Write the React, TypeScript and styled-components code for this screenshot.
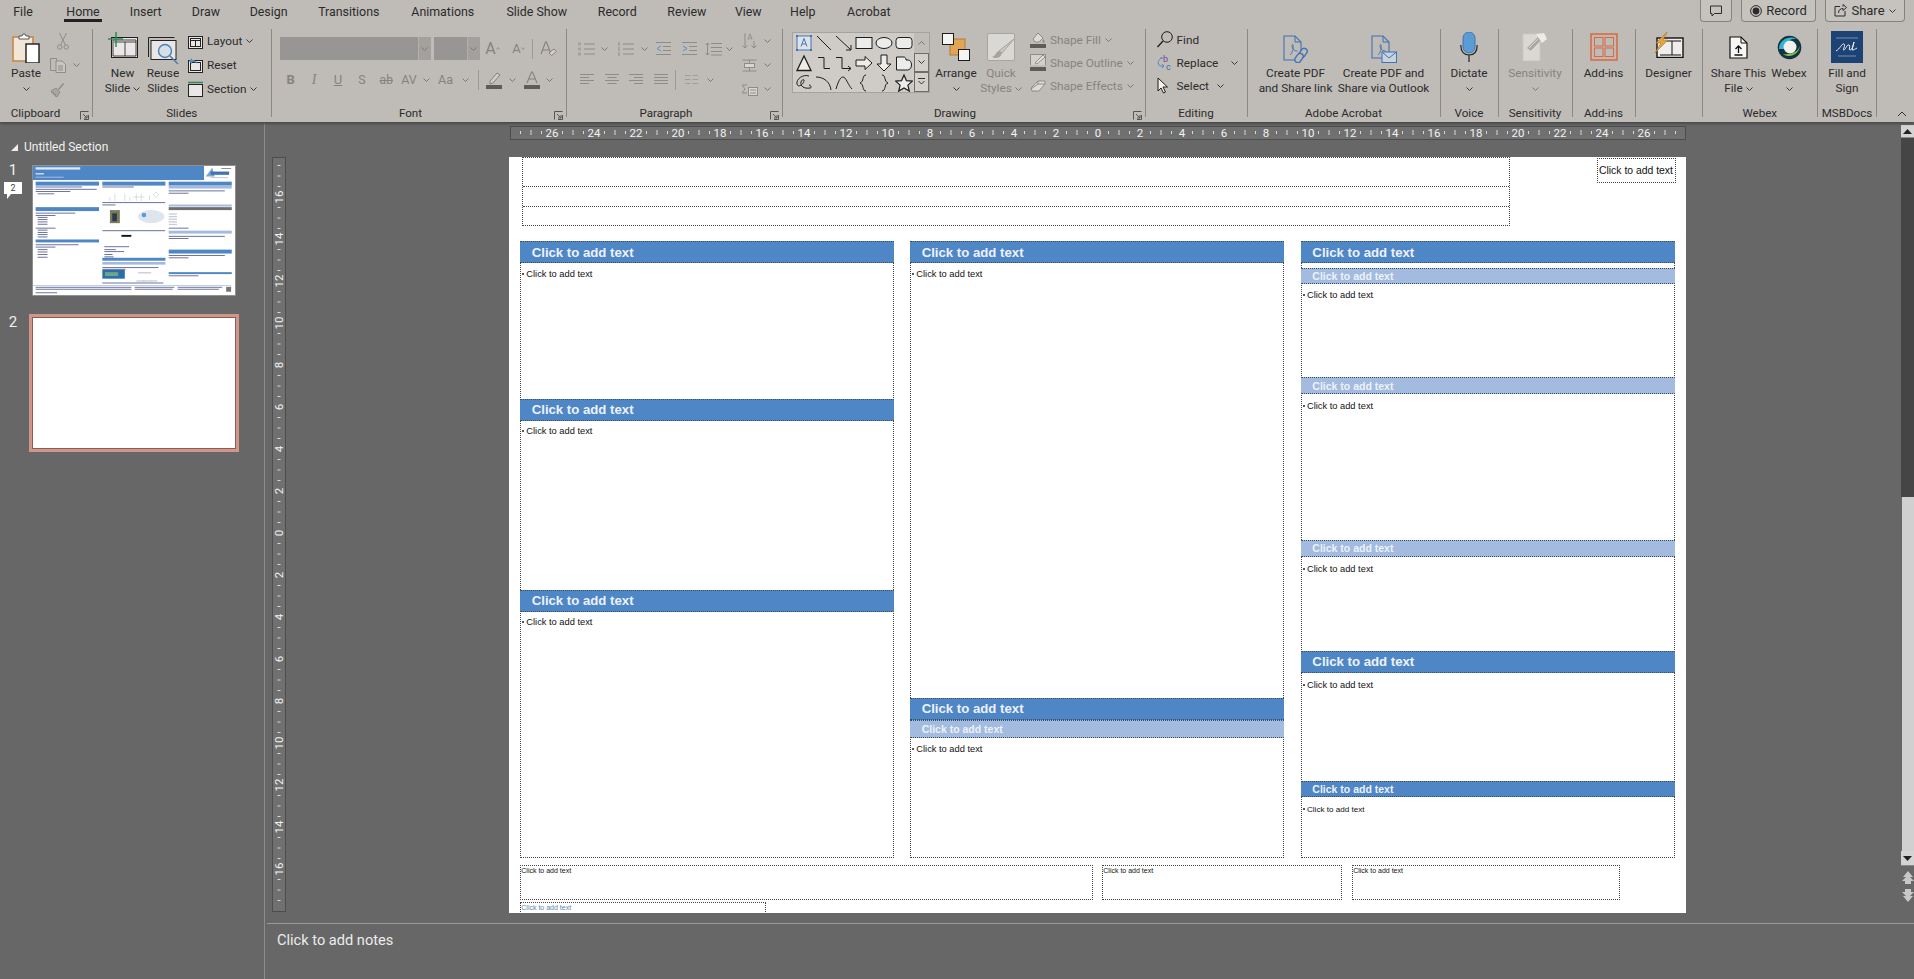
import React from "react";
import styled, { createGlobalStyle } from "styled-components";

const colors = {
  ribbon: "#bfbbb7",
  ribbonLine: "#8b8885",
  text: "#2b2b2b",
  muted: "#85837f",
  stage: "#676767",
  band: "#4f86c6",
  subBand: "#a3bbdf",
  dash: "#444444",
};

const GlobalStyle = createGlobalStyle`
  html, body { margin: 0; padding: 0; background: ${colors.stage}; overflow: hidden; }
  * { box-sizing: border-box; }
`;

const Root = styled.div`
  width: 1914px;
  height: 979px;
  display: flex;
  flex-direction: column;
  overflow: hidden;
  background: ${colors.stage};
  font-family: Roboto, "Noto Sans", sans-serif;
  color: ${colors.text};
`;

/* ---------- ribbon ---------- */

const Ribbon = styled.header`
  height: 122px;
  flex: none;
  background: ${colors.ribbon};
  box-shadow: 0 2px 2px #4c4c4c;
  position: relative;
  z-index: 2;
`;

const TabRow = styled.nav`
  height: 29px;
  display: flex;
  align-items: flex-start;
`;

const Tab = styled.div<{ $w: number; $active?: boolean }>`
  width: ${(p) => p.$w}px;
  height: 22px;
  flex: none;
  display: flex;
  align-items: center;
  justify-content: center;
  font-size: 12.4px;
  position: relative;
  ${(p) =>
    p.$active &&
    `&::after {
      content: "";
      position: absolute;
      left: 50%;
      margin-left: -19px;
      width: 38px;
      bottom: 0;
      height: 3px;
      background: #222;
    }`}
`;

const TopActions = styled.div`
  margin-left: auto;
  margin-right: 9px;
  display: flex;
  gap: 9px;
`;

const TopButton = styled.div<{ $w: number }>`
  width: ${(p) => p.$w}px;
  height: 22px;
  display: flex;
  align-items: center;
  justify-content: center;
  gap: 4px;
  border: 1px solid #86837f;
  border-top: none;
  border-radius: 0 0 4px 4px;
  background: #c6c3bf;
  font-size: 13px;
`;

const GroupRow = styled.div`
  display: flex;
  height: 88px;
  position: relative;
`;

const Group = styled.section<{ $w: number }>`
  width: ${(p) => p.$w}px;
  flex: none;
  height: 88px;
  display: grid;
  grid-template-rows: 76px 12px;
  border-right: 1px solid ${colors.ribbonLine};
  position: relative;
`;

const GroupBody = styled.div<{ $pad?: number }>`
  display: flex;
  align-items: flex-start;
  padding-left: ${(p) => p.$pad ?? 0}px;
`;

const GroupLabel = styled.div<{ $pr?: number }>`
  text-align: center;
  font-size: 11.6px;
  line-height: 16px;
  height: 16px;
  padding-right: ${(p) => p.$pr ?? 0}px;
  white-space: nowrap;
`;

const Launcher = styled.svg`
  position: absolute;
  right: 3px;
  bottom: -3px;
`;

const CollapseChevron = styled.svg`
  position: absolute;
  left: 1897px;
  top: 82px;
`;

const BigButton = styled.div<{ $w: number; $muted?: boolean; $ml?: number }>`
  width: ${(p) => p.$w}px;
  margin-left: ${(p) => p.$ml ?? 0}px;
  flex: none;
  display: flex;
  flex-direction: column;
  align-items: center;
  color: ${(p) => (p.$muted ? colors.muted : colors.text)};
`;

const IconSlot = styled.div<{ $top: number }>`
  height: 37px;
  padding-top: ${(p) => p.$top}px;
  display: flex;
  justify-content: center;
`;

const Line = styled.div`
  height: 15.4px;
  font-size: 11.8px;
  line-height: 15.4px;
  white-space: nowrap;
  display: flex;
  align-items: center;
  gap: 3px;
`;

const Stack = styled.div<{ $ml?: number; $row?: number; $mt?: number }>`
  margin-left: ${(p) => p.$ml ?? 0}px;
  margin-top: ${(p) => p.$mt ?? 0}px;
  display: flex;
  flex-direction: column;
  > * {
    height: ${(p) => p.$row ?? 24}px;
  }
`;

const SmallRow = styled.div<{ $muted?: boolean; $gap?: number }>`
  display: flex;
  align-items: center;
  gap: ${(p) => p.$gap ?? 4}px;
  font-size: 11.8px;
  white-space: nowrap;
  color: ${(p) => (p.$muted ? colors.muted : colors.text)};
`;

const ToolColumn = styled.div`
  display: flex;
  flex-direction: column;
  gap: 8px;
  padding-top: 8px;
`;

const ToolRow = styled.div`
  display: flex;
  align-items: center;
  height: 23px;
`;

const Cell = styled.div<{ $w: number }>`
  width: ${(p) => p.$w}px;
  flex: none;
  display: flex;
  align-items: center;
  justify-content: center;
  color: ${colors.muted};
  font-size: 12.5px;
`;

const BoldGlyph = styled.span`
  font-weight: 700;
  font-size: 13px;
`;

const ItalicGlyph = styled.span`
  font-style: italic;
  font-family: "Liberation Serif", serif;
  font-size: 14px;
`;

const UnderGlyph = styled.span`
  text-decoration: underline;
  font-size: 13px;
`;

const StrikeGlyph = styled.span`
  text-decoration: line-through;
  font-size: 12px;
`;

const CapGlyph = styled.span<{ $size: number }>`
  font-size: ${(p) => p.$size}px;
  line-height: 1;
`;

const CellRule = styled.div`
  width: 1px;
  height: 20px;
  background: #9c9995;
  flex: none;
`;

const NameBox = styled.div<{ $w: number; $ml?: number }>`
  width: ${(p) => p.$w}px;
  margin-left: ${(p) => p.$ml ?? 0}px;
  height: 23px;
  flex: none;
  background: #989694;
  display: flex;
  justify-content: flex-end;
`;

const DropPart = styled.div`
  width: 13px;
  height: 23px;
  background: #a3a19e;
  border-left: 1px solid #b2afac;
  display: flex;
  align-items: center;
  justify-content: center;
`;

const Gallery = styled.div`
  width: 138px;
  height: 61px;
  margin-top: 2.7px;
  flex: none;
  display: flex;
  background: #cfccc8;
  border: 1px solid #a5a29f;
`;

const ShapeGrid = styled.div`
  flex: 1;
  padding: 0 0 0 1px;
  display: grid;
  grid-template-columns: repeat(6, 20px);
  grid-template-rows: repeat(3, 20px);
  align-items: center;
  justify-items: center;
`;

const GalleryScroll = styled.div`
  width: 15px;
  flex: none;
  display: grid;
  grid-template-rows: 20px 19px 20px;
`;

const GalleryButton = styled.div<{ $active?: boolean }>`
  display: flex;
  align-items: center;
  justify-content: center;
  background: ${(p) => (p.$active ? "#d3d0cc" : "#c0bdb9")};
  border: ${(p) => (p.$active ? "1px solid #6f6d6a" : "none")};
`;

/* ---------- workspace ---------- */

const Workspace = styled.div`
  flex: 1;
  display: flex;
  min-height: 0;
`;

const ThumbPanel = styled.aside`
  width: 265px;
  flex: none;
  border-right: 1px solid #8d8d8d;
  padding: 17px 0 0 4px;
  display: flex;
  flex-direction: column;
  color: #f0f0f0;
`;

const SectionTitle = styled.div`
  height: 16px;
  display: flex;
  align-items: center;
  gap: 6px;
  padding-left: 7px;
  font-size: 12px;
  margin-bottom: 6.5px;
`;

const ThumbRow = styled.div`
  display: flex;
  margin-bottom: 14px;
`;

const NumberColumn = styled.div`
  width: 25px;
  flex: none;
  display: flex;
  flex-direction: column;
`;

const SlideNumber = styled.div`
  width: 18px;
  height: 17px;
  text-align: center;
  font-size: 15px;
  line-height: 17px;
`;

const CommentBadge = styled.div`
  margin-top: 3px;
  width: 18px;
  height: 12px;
  background: #fff;
  color: #444;
  font-size: 9px;
  line-height: 12px;
  text-align: center;
  position: relative;
  &::after {
    content: "";
    position: absolute;
    left: 3px;
    top: 12px;
    border-style: solid;
    border-width: 5px 4px 0 0;
    border-color: #fff transparent transparent transparent;
  }
`;

const ThumbFrame = styled.div<{ $selected?: boolean }>`
  width: 210px;
  height: 138px;
  padding: ${(p) => (p.$selected ? "0" : "3.5px 3.3px")};
  border: ${(p) => (p.$selected ? "3px solid #d1968a" : "none")};
  box-shadow: ${(p) => (p.$selected ? "inset 0 0 0 1px #8c5c52" : "none")};
`;

const ThumbPage = styled.div`
  width: 100%;
  height: 100%;
  background: #fff;
  border: 1px solid #8f8f8f;
  display: flex;
`;

const BlankPage = styled.div`
  margin: 1px;
  width: calc(100% - 2px);
  height: calc(100% - 2px);
  background: #fff;
`;

const Editor = styled.main`
  flex: 1;
  min-width: 0;
  display: flex;
  flex-direction: column;
`;

const StageRow = styled.div`
  height: 801px;
  flex: none;
  display: flex;
`;

const StageGrid = styled.div`
  flex: 1;
  display: grid;
  grid-template-columns: 244px 1177px 1fr;
  grid-template-rows: 35px 756px;
`;

const RulerH = styled.svg`
  display: block;
  grid-column: 2;
  grid-row: 1;
  margin: 4px 0 0 1px;
  background: #707070;
  outline: 1px solid #4d4d4d;
  outline-offset: -1px;
`;

const RulerV = styled.svg`
  display: block;
  grid-column: 1;
  grid-row: 2;
  margin-left: 7px;
  background: #707070;
  outline: 1px solid #4d4d4d;
  outline-offset: -1px;
`;

const RulerText = styled.text`
  fill: #f2f2f2;
  font-size: 11.5px;
  font-family: Roboto, sans-serif;
`;

const Scrollbar = styled.div`
  width: 13px;
  flex: none;
  padding-top: 3px;
  display: flex;
  flex-direction: column;
`;

const ScrollButton = styled.div<{ $h: number }>`
  height: ${(p) => p.$h}px;
  flex: none;
  background: #d4d4d4;
  border-bottom: 1px solid #8a8a8a;
  display: flex;
  align-items: center;
  justify-content: center;
`;

const ScrollTrack = styled.div`
  height: 358.5px;
  flex: none;
  background: #454545;
`;

const ScrollThumb = styled.div`
  height: 354.5px;
  flex: none;
  margin-left: 1px;
  background: #d0d0d0;
`;

const PageNav = styled.div`
  display: flex;
  flex-direction: column;
  align-items: center;
  gap: 5px;
  padding: 5px 0 0 1px;
`;

const Notes = styled.footer`
  flex: 1;
  margin-left: 2px;
  border-top: 1px solid #9a9a9a;
  padding: 6px 0 0 10px;
  font-size: 14.6px;
  line-height: 20px;
  color: #ececec;
`;

/* ---------- slide ---------- */

const Slide = styled.article`
  grid-column: 2;
  grid-row: 2;
  height: 756px;
  background: #fff;
  overflow: hidden;
  font-family: "Liberation Sans", Arial, sans-serif;
  color: #111;
  display: flex;
  flex-direction: column;
`;

const SlideTop = styled.div`
  height: 69px;
  flex: none;
  display: flex;
  justify-content: space-between;
  padding: 0 10.5px 0 13.3px;
`;

const TitleBlock = styled.div`
  width: 987.4px;
  border: 1px dotted ${colors.dash};
  display: grid;
  grid-template-rows: 29px 20px 1fr;
`;

const TitleLine = styled.div`
  border-bottom: 1px dotted ${colors.dash};
  &:last-child {
    border-bottom: none;
  }
`;

const LogoBox = styled.div`
  width: 79px;
  height: 25px;
  margin-top: 1px;
  border: 1px dotted ${colors.dash};
  padding: 5px 0 0 1.5px;
  font-size: 10.4px;
  line-height: 13px;
  white-space: nowrap;
`;

const Columns = styled.div`
  margin: 15.3px 0 0 11.3px;
  height: 616.4px;
  flex: none;
  display: flex;
`;

const Column = styled.div<{ $w: number; $ml?: number }>`
  width: ${(p) => p.$w}px;
  margin-left: ${(p) => p.$ml ?? 0}px;
  flex: none;
  border: 1px dotted ${colors.dash};
  display: flex;
  flex-direction: column;
`;

const Band = styled.div<{ $kind?: "main" | "sub" | "small"; $h?: number }>`
  height: ${(p) => p.$h ?? (p.$kind === "main" || !p.$kind ? 22 : 16.6)}px;
  flex: none;
  margin: 0 -1px;
  border-top: 1px dotted #3d4c60;
  border-bottom: 1px dotted #3d4c60;
  background: ${(p) => (p.$kind === "sub" ? colors.subBand : colors.band)};
  color: #edf2fa;
  font-weight: 700;
  font-size: ${(p) => (p.$kind === "main" || !p.$kind ? 13.2 : 10.5)}px;
  display: flex;
  align-items: center;
  padding-left: 11.4px;
  white-space: nowrap;
  &:first-child {
    margin-top: -1px;
  }
`;

const Body = styled.div<{ $h?: number; $pt?: number }>`
  ${(p) => (p.$h ? `height: ${p.$h}px; flex: none;` : "flex: 1;")}
  display: flex;
  padding: ${(p) => p.$pt ?? 4.5}px 0 0 1px;
`;

const BulletText = styled.div<{ $small?: boolean }>`
  display: flex;
  align-items: center;
  height: 12px;
  font-size: ${(p) => (p.$small ? 8.1 : 9.3)}px;
  white-space: nowrap;
  &::before {
    content: "";
    width: 2px;
    height: 2px;
    border-radius: 50%;
    background: #222;
    margin-right: 2px;
  }
`;

const FooterRow = styled.div`
  margin: 7.6px 0 0 11.3px;
  height: 34.4px;
  flex: none;
  display: flex;
  gap: 9.7px;
`;

const NoteBox = styled.div<{ $w: number }>`
  width: ${(p) => p.$w}px;
  flex: none;
  border: 1px dotted ${colors.dash};
  font-size: 7px;
  line-height: 9px;
  white-space: nowrap;
`;

const SourceBox = styled.div`
  margin: 2.3px 0 0 11.3px;
  width: 245.5px;
  height: 14px;
  flex: none;
  border: 1px dotted ${colors.dash};
  font-size: 7px;
  line-height: 10px;
  color: #5a86b0;
  white-space: nowrap;
`;

/* ---------- icons ---------- */

const Svg = ({ w, h, children }: { w: number; h: number; children?: React.ReactNode }) => (
  <svg width={w} height={h} viewBox={`0 0 ${w} ${h}`} fill="none" style={{ flex: "none", display: "block" }}>
    {children}
  </svg>
);

const Chev = ({ color = "#3a3a3a" }: { color?: string }) => (
  <Svg w={7} h={4}>
    <path d="M.5.5l3 3 3-3" stroke={color} />
  </Svg>
);

const MutedChev = () => <Chev color="#7b7976" />;

const LauncherIcon = () => (
  <Launcher width="9" height="9" viewBox="0 0 9 9" fill="none">
    <path d="M.5 8.5V.5h8M8.5 4v4.5H4M3 3l4 4M7 4v3H4" stroke="#555" />
  </Launcher>
);

const PasteIcon = () => (
  <Svg w={28} h={30}>
    <rect x="1" y="4" width="20" height="24" fill="#f2e6d6" stroke="#c4894c" strokeWidth="1.6" />
    <path d="M7 6V3h3l1-2h2l1 2h3v3z" fill="#fff" stroke="#555" />
    <rect x="14" y="11" width="13" height="19" fill="#fff" stroke="#1c1c1c" strokeWidth="1.4" />
  </Svg>
);

const CutIcon = () => (
  <Svg w={12} h={17}>
    <path d="M2.5 0l6 12M9.5 0l-6 12" stroke="#8e8c88" />
    <circle cx="2.8" cy="14" r="2.2" stroke="#8e8c88" />
    <circle cx="9.2" cy="14" r="2.2" stroke="#8e8c88" />
  </Svg>
);

const CopyIcon = () => (
  <Svg w={17} h={15}>
    <path d="M.5.5h6v12h-6z" stroke="#8e8c88" />
    <path d="M6 3h6l3.5 3.5V14.5H6z" fill="#c9c6c2" stroke="#8e8c88" />
    <path d="M8 8h5M8 10h5M8 12h5" stroke="#8e8c88" />
  </Svg>
);

const BrushIcon = () => (
  <Svg w={15} h={15}>
    <path d="M1 9l5-3 4 4-3 5-2-1 1-2-2 1-1-1 1-2-2 1z" fill="#aaa7a3" stroke="#8e8c88" />
    <path d="M8 7l5-6 1 1-5 6z" fill="#8e8c88" />
  </Svg>
);

const NewSlideIcon = () => (
  <Svg w={30} h={26}>
    <rect x="3.5" y="5.5" width="26" height="20" fill="#e9e8e6" stroke="#1d1d1d" />
    <path d="M5 8h23M5 24h23M5 8v16M28 8v16M17 10v14M6 10h22" stroke="#1d1d1d" strokeWidth=".8" />
    <path d="M8 0v15M0 7h15" stroke="#2f8a57" strokeWidth="1.5" />
  </Svg>
);

const ReuseIcon = () => (
  <Svg w={31} h={28}>
    <path d="M.5 20V.5h26" stroke="#222" />
    <rect x="3" y="3.5" width="25" height="19" fill="#e8e7e5" stroke="#222" />
    <circle cx="17" cy="14" r="6.5" fill="#d7dee7" stroke="#4e7fb4" strokeWidth="1.4" />
    <path d="M22 19l8 8" stroke="#4e7fb4" strokeWidth="1.6" />
  </Svg>
);

const FrameIcon = ({ kind }: { kind: "layout" | "reset" | "section" }) => (
  <Svg w={15} h={16}>
    {kind === "section" && <path d="M0 1.5h15" stroke="#2f8a57" strokeWidth="1.5" />}
    <rect x=".5" y="3.5" width="14" height="12" fill="#e8e7e5" stroke="#222" />
    {kind !== "section" && <rect x="2.5" y="5.5" width="10" height="8" stroke="#222" />}
    {kind === "layout" && <path d="M2.5 7.5h10M7.5 7.5v6" stroke="#222" />}
    {kind === "reset" && <path d="M1 4l3-3v2c3 0 5 1 5 4-1-2-3-2-5-2v2z" fill="#5c8cc4" />}
  </Svg>
);

const AGlyph = ({ size, up }: { size: number; up: boolean }) => (
  <Cell $w={26}>
    <CapGlyph $size={size}>A</CapGlyph>
    <Svg w={4} h={3}>
      <path d={up ? "M.5 2.5l1.5-2 1.5 2" : "M.5.5l1.5 2 1.5-2"} stroke={colors.muted} strokeWidth=".7" />
    </Svg>
  </Cell>
);

const ClearIcon = () => (
  <Svg w={17} h={15}>
    <path d="M1 13L5.5 1h1L11 13M3 9h6" stroke={colors.muted} strokeWidth="1.1" />
    <path d="M9 12l5-4 2.5 2.5-5 4z" fill="#d9cfc7" stroke={colors.muted} />
  </Svg>
);

const ColorBar = ({ kind }: { kind: "pen" | "font" }) => (
  <Svg w={16} h={18}>
    {kind === "pen" ? (
      <path d="M4 10l7-8 3 2-7 8-3 1z" fill="#cfccc8" stroke={colors.muted} />
    ) : (
      <path d="M3 12L7.5 1h1L13 12M5 8h6" stroke={colors.muted} strokeWidth="1.1" />
    )}
    <rect x="0" y="14" width="16" height="4" fill="#5e5c5a" />
  </Svg>
);

const ListIcon = ({ kind }: { kind: "bullet" | "number" }) => (
  <Svg w={17} h={14}>
    {[2, 7, 12].map((y) => (
      <path key={y} d={`M6 ${y}h11`} stroke="#8e8c88" />
    ))}
    {[2, 7, 12].map((y) =>
      kind === "bullet" ? (
        <rect key={y} x="0" y={y - 1.5} width="3" height="3" fill="#a4a29e" />
      ) : (
        <path key={y} d={`M2 ${y - 2}v4`} stroke="#8e8c88" />
      )
    )}
  </Svg>
);

const IndentIcon = ({ dir }: { dir: "in" | "out" }) => (
  <Svg w={15} h={13}>
    <path d="M0 .5h15M7 4.5h8M7 8.5h8M0 12.5h15" stroke="#8e8c88" />
    <path d={dir === "out" ? "M5 4L1 6.5 5 9" : "M1 4l4 2.5L1 9"} stroke="#5d8fc2" />
  </Svg>
);

const LineSpacingIcon = () => (
  <Svg w={17} h={14}>
    <path d="M6 1.5h11M6 5.5h11M6 9.5h11M6 13h11M2.5 1v12M.5 3l2-2 2 2M.5 11l2 2 2-2" stroke="#8e8c88" />
  </Svg>
);

const AlignIcon = ({ kind }: { kind: "left" | "center" | "right" | "justify" }) => {
  const short = kind === "justify" ? 14 : 9;
  const x = kind === "left" || kind === "justify" ? 0 : kind === "center" ? 2.5 : 5;
  return (
    <Svg w={14} h={13}>
      <path d={`M0 1.5h14M${x} 4.5h${short}M0 7.5h14M${x} 10.5h${short}`} stroke="#8e8c88" />
    </Svg>
  );
};

const ColumnsIcon = () => (
  <Svg w={13} h={12}>
    <path d="M0 1.5h5.5M7.5 1.5H13M0 5.5h5.5M7.5 5.5H13M0 9.5h5.5M7.5 9.5H13" stroke="#a09e9a" />
  </Svg>
);

const TextDirIcon = () => (
  <Svg w={15} h={17}>
    <path d="M3 0v15M.5 12.5L3 15l2.5-2.5M12 8v7M9.5 12.5L12 15l2.5-2.5" stroke="#8e8c88" />
    <path d="M6 7l1.7-6h.6L10 7M6.5 5h3" stroke="#8e8c88" strokeWidth=".8" />
  </Svg>
);

const AlignTextIcon = () => (
  <Svg w={15} h={15}>
    <path d="M.5 2h14M.5 13h14M7.5 2v3M7.5 13v-3" stroke="#8e8c88" />
    <rect x="2.5" y="5.5" width="10" height="4" fill="#d9d6d2" stroke="#8e8c88" />
  </Svg>
);

const SmartArtIcon = () => (
  <Svg w={16} h={13}>
    <path d="M5 2H0l3 4-3 4h5" stroke="#8e8c88" />
    <rect x="6.5" y="4.5" width="9" height="8" fill="#d9d6d2" stroke="#8e8c88" />
    <path d="M8 7h6M8 10h6" stroke="#8e8c88" />
  </Svg>
);

const shapeStroke = { stroke: "#1d1d1d", fill: "none" };
const shapeFill = { stroke: "#1d1d1d", fill: "#ececea" };

const shapes: React.ReactNode[] = [
  <>
    <rect x="2" y="2" width="14" height="14" fill="#dfe3e8" stroke="#3f76b4" />
    <rect x="1" y="1" width="2" height="2" fill="#3f76b4" />
    <rect x="15" y="1" width="2" height="2" fill="#3f76b4" />
    <rect x="1" y="15" width="2" height="2" fill="#3f76b4" />
    <rect x="15" y="15" width="2" height="2" fill="#3f76b4" />
    <path d="M6 12.5l3-8 3 8M7.2 10h3.6" stroke="#3f76b4" />
  </>,
  <path d="M2 2l14 14" {...shapeStroke} />,
  <path d="M1 2l15 14M11 16h5v-5" {...shapeStroke} />,
  <rect x="1" y="3.5" width="16" height="11" {...shapeFill} />,
  <ellipse cx="9" cy="9" rx="8" ry="5.5" {...shapeFill} />,
  <rect x="1" y="3.5" width="16" height="11" rx="3" {...shapeFill} />,
  <path d="M9 2l7 14.5H2z" {...shapeFill} strokeWidth="1.3" />,
  <path d="M3 3.5h6v11h6" {...shapeStroke} />,
  <path d="M1 3.5h6v11h9M13 12l3 2.5-3 2.5" {...shapeStroke} />,
  <path d="M1 6h9V2.5L17 9l-7 6.5V12H1z" {...shapeFill} />,
  <path d="M6 1h6v9h4l-7 7-7-7h4z" {...shapeFill} />,
  <path d="M1.5 3H9c1 0 2 1 2 3h2c2 0 3.5 2 3.5 5s-2 5-4 5H1.5z" {...shapeFill} />,
  <path d="M14 2C8 0 1 5 2 10c1 4 6 1 7-3 .5-2-2-2-3 1-1 4 3 7 9 6 2 0 1-3-1-3" {...shapeStroke} />,
  <path d="M1 3c8 0 14 5 15 13" {...shapeStroke} />,
  <path d="M1 15C4 5 6 3 8 3c3 0 5 8 9 12" {...shapeStroke} />,
  <path d="M11 1C7 1 9 8 5 9c4 1 2 8 6 8" {...shapeStroke} />,
  <path d="M7 1c4 0 2 7 6 8-4 1-2 8-6 8" {...shapeStroke} />,
  <path d="M9 1l2.4 5.6 6 .5-4.5 4 1.4 6L9 14l-5.3 3.1 1.4-6L.6 7.100l6-.5z" {...shapeFill} strokeWidth="1.2" />,
];

const ArrangeIcon = () => (
  <Svg w={28} h={28}>
    <rect x="8" y="6" width="15" height="16" fill="#e2a457" stroke="#b97a31" />
    <rect x=".5" y=".5" width="11" height="11" fill="#f4f4f2" stroke="#1c1c1c" />
    <rect x="16.5" y="16.5" width="11" height="11" fill="#f4f4f2" stroke="#1c1c1c" />
  </Svg>
);

const QuickStylesIcon = () => (
  <Svg w={29} h={29}>
    <rect x=".5" y=".5" width="27" height="27" rx="1.5" fill="#dad8d5" stroke="#a7a5a2" />
    <path d="M27 6L15 20l-3-2z" fill="#cfccc8" stroke="#a09e9a" />
    <path d="M12 18c-3 0-2 4-7 6 4 2 9 1 10-4z" fill="#a5a29f" />
  </Svg>
);

const FillIcon = () => (
  <Svg w={16} h={17}>
    <path d="M3 8l5-6 5 5-4 4H5z" fill="#dedbd7" stroke="#8e8c88" />
    <path d="M13 8c2 2 2 3 1 4-1 0-2-1-1-4z" fill="#8e8c88" />
    <rect x="0" y="13" width="16" height="4" fill="#5e5c5a" />
  </Svg>
);

const OutlineIcon = () => (
  <Svg w={16} h={17}>
    <path d="M.5 11V.5h15V11" fill="#d3d0cc" stroke="#8e8c88" />
    <path d="M5 9l8-8 2 2-8 7z" fill="#e6e3e0" stroke="#8e8c88" />
    <rect x="0" y="13" width="16" height="4" fill="#5e5c5a" />
  </Svg>
);

const EffectsIcon = () => (
  <Svg w={16} h={14}>
    <path d="M1 9l7-7h7v3l-6 7H2z" fill="#dedbd7" stroke="#8e8c88" />
    <path d="M8 2v3h7M8 5l-7 5" stroke="#8e8c88" />
  </Svg>
);

const FindIcon = () => (
  <Svg w={16} h={17}>
    <circle cx="10" cy="6" r="5.3" stroke="#1c1c1c" />
    <path d="M6 10l-5.5 6" stroke="#1c1c1c" strokeWidth="1.3" />
  </Svg>
);

const ReplaceIcon = () => (
  <Svg w={16} h={17}>
    <text x="6" y="8" fontSize="9" fill="#7b3f98" fontFamily="Roboto, sans-serif">b</text>
    <text x="9" y="16" fontSize="9" fill="#3c6fa8" fontFamily="Roboto, sans-serif">c</text>
    <path d="M5 4C1 5 0 10 3 12h4M5 10l2 2-2 2M3 4h3" stroke="#4f86c6" />
  </Svg>
);

const SelectIcon = () => (
  <Svg w={12} h={17}>
    <path d="M1 1v13l3-3 2.5 5 2-1-2.5-5h4.5z" fill="#f1f1ef" stroke="#1c1c1c" />
  </Svg>
);

const PdfGlyph = () => (
  <path d="M7 20c2-2 4-6 3-10-.5-1.5-1.5 0-.5 3 1 2 3 3 5 3" stroke="#3f73b3" strokeWidth=".9" />
);

const PdfLinkIcon = () => (
  <Svg w={26} h={28}>
    <path d="M1 1h11l6 6v18H1z" stroke="#3f73b3" strokeWidth="1.1" />
    <path d="M12 1v6h6" stroke="#3f73b3" />
    <PdfGlyph />
    <g stroke="#3f73b3" strokeWidth="1.4" fill="#bfbbb7">
      <rect x="17" y="13" width="6" height="10" rx="3" transform="rotate(35 20 18)" />
      <rect x="13" y="18" width="6" height="10" rx="3" transform="rotate(35 16 23)" />
    </g>
  </Svg>
);

const PdfMailIcon = () => (
  <Svg w={26} h={28}>
    <path d="M1 1h11l6 6v16H1z" stroke="#3f73b3" strokeWidth="1.1" />
    <path d="M12 1v6h6" stroke="#3f73b3" />
    <PdfGlyph />
    <rect x="11" y="17" width="14.5" height="10.5" fill="#c9d3de" stroke="#3f73b3" />
    <path d="M11 17l7 6 7.5-6" stroke="#3f73b3" />
  </Svg>
);

const MicIcon = () => (
  <Svg w={18} h={30}>
    <rect x="3" y="0" width="12" height="21" rx="6" fill="#5b9bd6" stroke="#4077ad" />
    <path d="M.8 13c0 7 3.5 10 8.2 10s8.2-3 8.2-10M9 23v7" stroke="#222" strokeWidth="1.2" />
  </Svg>
);

const SensitivityIcon = () => (
  <Svg w={26} h={29}>
    <path d="M1 2h17v27H1z" fill="#dad8d5" stroke="#c9c7c4" />
    <path d="M5 16l11-11 3 3-10 11z" fill="#a9a7a4" />
    <path d="M14 2l8-1 3 6-5 4z" fill="#ecebe9" />
    <path d="M7 16l9-9M9 19l9-9" stroke="#dad8d5" />
  </Svg>
);

const AddinsIcon = () => (
  <Svg w={28} h={28}>
    <rect x="1" y="1" width="26" height="26" fill="#c9b5aa" stroke="#d16b48" strokeWidth="1.5" />
    <rect x="4.5" y="4.5" width="8.5" height="8.5" fill="#bfbbb7" stroke="#d16b48" />
    <rect x="15" y="4.5" width="8.5" height="8.5" fill="#bfbbb7" stroke="#d16b48" />
    <rect x="4.5" y="15" width="8.5" height="8.5" fill="#bfbbb7" stroke="#d16b48" />
    <rect x="15" y="15" width="8.5" height="8.5" fill="#bfbbb7" stroke="#d16b48" />
  </Svg>
);

const DesignerIcon = () => (
  <Svg w={30} h={26}>
    <rect x="3" y="6" width="26" height="19.5" fill="#efeeec" stroke="#111" strokeWidth="1.4" />
    <path d="M6 9h21M18 9v14M6 23h21" stroke="#111" />
    <path d="M13 0L2 11h5L1 21l13-13H9z" fill="#e6a33e" stroke="#a9752a" strokeWidth=".6" />
  </Svg>
);

const ShareFileIcon = () => (
  <Svg w={19} h={23}>
    <path d="M1 1h11l6 6v15H1z" fill="#f7f7f5" stroke="#111" strokeWidth="1.2" />
    <path d="M12 1v6h6" stroke="#111" />
    <path d="M9.5 17V10M6.5 13l3-3 3 3M5.5 19h8" stroke="#111" strokeWidth="1.3" />
  </Svg>
);

const WebexIcon = () => (
  <Svg w={25} h={25}>
    <circle cx="12.5" cy="12.5" r="11.8" fill="#14333f" />
    <path d="M2 14C2 5 12 0 20 4c-7-1-12 4-13 10z" fill="#33b3cf" />
    <path d="M6 19c7 5 16 0 17-8-2 6-9 9-17 8z" fill="#7bc24a" />
    <circle cx="13" cy="12" r="6.5" fill="#eef1ee" />
  </Svg>
);

const SignIcon = () => (
  <Svg w={32} h={32}>
    <rect width="32" height="32" fill="#1d4274" />
    <path d="M5 7h22M7 25h18" stroke="#8fa3bf" strokeWidth=".8" />
    <path d="M5 20c4-2 6-8 8-7s-2 7 0 6 3-6 5-5-1 5 1 5 3-4 4-8l-2 8c2 0 3-1 5-2" stroke="#f2f4f7" />
  </Svg>
);

const CommentIcon = () => (
  <Svg w={12} h={12}>
    <path d="M.5 1h11v7.5H4.5L2 11V8.5H.5z" stroke="#2b2b2b" />
  </Svg>
);

const RecordIcon = () => (
  <Svg w={12} h={12}>
    <circle cx="6" cy="6" r="5.4" stroke="#2b2b2b" />
    <circle cx="6" cy="6" r="3.4" fill="#2b2b2b" />
  </Svg>
);

const ShareIcon = () => (
  <Svg w={13} h={13}>
    <path d="M6 2.5H1V12h10V7M4.5 9c0-3 2-4.5 4.5-4.5v2l3.5-3L9 .5v2" stroke="#2b2b2b" />
  </Svg>
);

const Triangle = ({ down }: { down?: boolean }) => (
  <Svg w={9} h={5}>
    <path d={down ? "M0 0h9L4.5 5z" : "M0 5h9L4.5 0z"} fill="#222" />
  </Svg>
);

const PageNavIcon = ({ down }: { down?: boolean }) => (
  <Svg w={12} h={13}>
    <g transform={down ? "rotate(180 6 6.5)" : undefined} fill="#c8c8c8">
      <path d="M6 0l5 6H1z" />
      <path d="M6 4l6 6H0z" />
      <rect x="3" y="10" width="6" height="3" />
    </g>
  </Svg>
);

/* ---------- rulers ---------- */

const hNumbers = Array.from({ length: 27 }, (_, i) => i);
const vNumbers = Array.from({ length: 17 }, (_, i) => i);

const HorizontalRuler = () => (
  <RulerH width="1176" height="14" viewBox="0 0 1176 14">
    {Array.from({ length: 113 }, (_, i) => i).map((i) => {
      const x = 588 + (i - 56) * 10.5;
      if (i % 4 === 0) return null;
      return <path key={i} d={`M${x} ${i % 2 ? 5 : 4}v${i % 2 ? 3 : 5}`} stroke="#d8d8d8" />;
    })}
    {hNumbers.map((i) => (
      <RulerText key={i} x={588 + (i - 13) * 42} y="7" textAnchor="middle" dominantBaseline="central">
        {Math.abs(i - 13) * 2}
      </RulerText>
    ))}
  </RulerH>
);

const VerticalRuler = () => (
  <RulerV width="14" height="755" viewBox="0 0 14 755">
    {Array.from({ length: 72 }, (_, i) => i).map((i) => {
      const y = 376 + (i - 36) * 10.5;
      if (i % 4 === 0) return null;
      return <path key={i} d={`M5.5 ${y}h3`} stroke="#d8d8d8" />;
    })}
    {vNumbers.map((i) => {
      const y = 376 + (i - 8) * 42;
      return (
        <RulerText key={i} x="7" y={y} textAnchor="middle" dominantBaseline="central" transform={`rotate(-90 7 ${y})`}>
          {Math.abs(i - 8) * 2}
        </RulerText>
      );
    })}
  </RulerV>
);

/* ---------- thumbnail of slide 1 ---------- */

const thumbBands: [number, number, number, number, string][] = [
  [30, 63, 192, 12, colors.band],
  [232, 63, 191, 12, colors.band],
  [433, 63, 191, 12, colors.band],
  [433, 75, 191, 9, colors.subBand],
  [30, 141, 192, 12, colors.band],
  [30, 240, 192, 9, colors.band],
  [232, 296, 191, 9, colors.band],
  [232, 309, 191, 8, colors.subBand],
  [433, 133, 191, 6, colors.subBand],
  [433, 141, 191, 9, "#6e6e6e"],
  [433, 213, 191, 9, colors.subBand],
  [433, 271, 191, 12, colors.band],
  [433, 340, 191, 6, colors.band],
];

const thumbLines: [number, number, number][] = [
  [30, 78, 140], [30, 85, 185], [30, 92, 105], [36, 99, 50],
  [30, 158, 120], [30, 165, 60], [36, 171, 30], [36, 178, 30], [36, 185, 30], [36, 192, 30],
  [30, 204, 60], [36, 210, 30], [36, 217, 30], [36, 224, 30], [36, 231, 30],
  [30, 255, 130], [30, 262, 60], [36, 270, 30], [36, 277, 30], [36, 285, 30], [36, 293, 30],
  [232, 78, 95], [232, 126, 190], [232, 133, 40], [232, 212, 190], [290, 230, 28],
  [238, 261, 75], [238, 270, 35], [238, 276, 60], [238, 285, 25], [238, 292, 28],
  [232, 325, 170], [232, 330, 70], [232, 372, 185],
  [433, 90, 170], [433, 97, 60], [433, 204, 60], [433, 229, 170], [433, 236, 60],
  [433, 288, 170], [433, 295, 60], [433, 350, 90],
  [30, 385, 290], [30, 391, 290], [330, 385, 120], [330, 391, 115], [460, 385, 135], [460, 391, 125], [30, 402, 65],
];

const thumbGray: [number, number, number][] = [
  [433, 160, 25], [433, 168, 25], [433, 176, 25], [433, 184, 25], [433, 192, 25],
  [340, 340, 40], [335, 365, 25], [355, 365, 25], [378, 365, 20],
];

const FirstSlideThumb = () => (
  <svg width="100%" height="100%" viewBox="22 15 610 395" preserveAspectRatio="none">
    <rect x="22" y="15" width="518" height="43" fill={colors.band} />
    <rect x="30" y="19" width="135" height="7" fill="#dfe8f5" />
    <rect x="30" y="37" width="25" height="4" fill="#dfe8f5" />
    <rect x="30" y="48" width="85" height="2" fill="#cfdcef" />
    <path d="M545 47l20-27 8 27z" fill="#7aa5d6" />
    <rect x="560" y="32" width="56" height="10" fill="#3f73b3" />
    <rect x="560" y="50" width="52" height="2" fill="#aaa" />
    <rect x="592" y="22" width="30" height="2" fill="#555" />
    {thumbBands.map(([x, y, w, h, c]) => (
      <rect key={`${x}-${y}`} x={x} y={y} width={w} height={h} fill={c} />
    ))}
    {thumbLines.map(([x, y, w]) => (
      <rect key={`${x}-${y}`} x={x} y={y} width={w} height="2.5" fill="#1f2a6b" opacity=".8" />
    ))}
    {thumbGray.map(([x, y, w]) => (
      <rect key={`${x}-${y}`} x={x} y={y} width={w} height="4" fill="#c7ccd6" />
    ))}
    <path d="M255 110v12M270 100v22M300 100v22M315 110v12M335 100v22M350 100v22M325 110h35M375 120v-15M395 95l8 8-8 8-8-8z" stroke="#c8ccd2" strokeWidth="2" fill="none" />
    <rect x="255" y="150" width="30" height="40" fill="#7a7a5c" />
    <rect x="262" y="160" width="14" height="24" fill="#2e3a4a" />
    <ellipse cx="380" cy="170" rx="40" ry="20" fill="#dde6ef" />
    <circle cx="358" cy="165" r="7" fill="#5b9bd6" />
    <rect x="290" y="226" width="30" height="5" fill="#111" />
    <rect x="232" y="333" width="68" height="27" fill="#2b6ea6" />
    <rect x="240" y="340" width="40" height="12" fill="#6ea38c" />
    <rect x="22" y="381" width="600" height="1" fill="#3c6fa8" />
    <rect x="607" y="385" width="15" height="15" fill="#777" />
  </svg>
);

/* ---------- data ---------- */

const tabs: { label: string; w: number; active?: boolean }[] = [
  { label: "File", w: 46 },
  { label: "Home", w: 74, active: true },
  { label: "Insert", w: 51.4 },
  { label: "Draw", w: 69 },
  { label: "Design", w: 56.4 },
  { label: "Transitions", w: 104 },
  { label: "Animations", w: 84 },
  { label: "Slide Show", w: 104 },
  { label: "Record", w: 57 },
  { label: "Review", w: 82 },
  { label: "View", w: 41 },
  { label: "Help", w: 68 },
  { label: "Acrobat", w: 64 },
];

const fontRow: [number, React.ReactNode][] = [
  [22.5, <BoldGlyph>B</BoldGlyph>],
  [24, <ItalicGlyph>I</ItalicGlyph>],
  [24, <UnderGlyph>U</UnderGlyph>],
  [24, <span>S</span>],
  [24.5, <StrikeGlyph>ab</StrikeGlyph>],
  [21, <span>AV</span>],
  [13, <MutedChev />],
  [26, <span>Aa</span>],
  [13, <MutedChev />],
];

const BigTool = ({
  w,
  top,
  icon,
  lines,
  chev,
  muted,
  ml,
}: {
  w: number;
  top: number;
  icon: React.ReactNode;
  lines: string[];
  chev?: boolean;
  muted?: boolean;
  ml?: number;
}) => (
  <BigButton $w={w} $muted={muted} $ml={ml}>
    <IconSlot $top={top}>{icon}</IconSlot>
    <Line>{lines[0]}</Line>
    <Line>
      {lines[1]}
      {chev && (muted ? <MutedChev /> : <Chev />)}
    </Line>
  </BigButton>
);

const SlideBand = ({ kind, h }: { kind?: "main" | "sub" | "small"; h?: number }) => (
  <Band $kind={kind} $h={h}>Click to add text</Band>
);

const SlideBody = ({ h, small, pt }: { h?: number; small?: boolean; pt?: number }) => (
  <Body $h={h} $pt={pt}>
    <BulletText $small={small}>Click to add text</BulletText>
  </Body>
);

export default function App() {
  return (
    <Root>
      <GlobalStyle />
      <Ribbon>
        <TabRow>
          {tabs.map((t) => (
            <Tab key={t.label} $w={t.w} $active={t.active}>
              {t.label}
            </Tab>
          ))}
          <TopActions>
            <TopButton $w={32}><CommentIcon /></TopButton>
            <TopButton $w={75}><RecordIcon />Record</TopButton>
            <TopButton $w={80}><ShareIcon />Share<Chev /></TopButton>
          </TopActions>
        </TabRow>
        <GroupRow>
          <Group $w={93}>
            <GroupBody $pad={2}>
              <BigTool w={48} top={4} icon={<PasteIcon />} lines={["Paste"]} chev />
              <Stack>
                <SmallRow><Svg w={3} h={1} /><CutIcon /></SmallRow>
                <SmallRow $gap={6}><CopyIcon /><MutedChev /></SmallRow>
                <SmallRow><BrushIcon /></SmallRow>
              </Stack>
            </GroupBody>
            <GroupLabel $pr={21}>Clipboard</GroupLabel>
            <LauncherIcon />
          </Group>

          <Group $w={178.5}>
            <GroupBody $pad={2}>
              <BigTool w={55} top={2.7} icon={<NewSlideIcon />} lines={["New", "Slide"]} chev />
              <BigTool w={26} top={7.7} icon={<ReuseIcon />} lines={["Reuse", "Slides"]} />
              <Stack $ml={12}>
                <SmallRow><FrameIcon kind="layout" />Layout<Chev /></SmallRow>
                <SmallRow><FrameIcon kind="reset" />Reset</SmallRow>
                <SmallRow><FrameIcon kind="section" />Section<Chev /></SmallRow>
              </Stack>
            </GroupBody>
            <GroupLabel>Slides</GroupLabel>
          </Group>

          <Group $w={295}>
            <GroupBody $pad={8}>
              <ToolColumn>
                <ToolRow>
                  <NameBox $w={151}><DropPart><MutedChev /></DropPart></NameBox>
                  <NameBox $w={46} $ml={3}><DropPart><MutedChev /></DropPart></NameBox>
                  <AGlyph size={16} up />
                  <AGlyph size={13} up={false} />
                  <CellRule />
                  <Cell $w={32}><ClearIcon /></Cell>
                </ToolRow>
                <ToolRow>
                  {fontRow.map(([w, node], i) => (
                    <Cell key={i} $w={w}>{node}</Cell>
                  ))}
                  <Cell $w={6.5} />
                  <CellRule />
                  <Cell $w={29}><ColorBar kind="pen" /></Cell>
                  <Cell $w={9.5}><MutedChev /></Cell>
                  <Cell $w={28}><ColorBar kind="font" /></Cell>
                  <Cell $w={8}><MutedChev /></Cell>
                </ToolRow>
              </ToolColumn>
            </GroupBody>
            <GroupLabel $pr={16}>Font</GroupLabel>
            <LauncherIcon />
          </Group>

          <Group $w={216}>
            <GroupBody $pad={8.7}>
              <ToolColumn>
                <ToolRow>
                  <Cell $w={22}><ListIcon kind="bullet" /></Cell>
                  <Cell $w={14}><MutedChev /></Cell>
                  <Cell $w={28}><ListIcon kind="number" /></Cell>
                  <Cell $w={10}><MutedChev /></Cell>
                  <Cell $w={29}><IndentIcon dir="out" /></Cell>
                  <Cell $w={22}><IndentIcon dir="in" /></Cell>
                  <Cell $w={26}><LineSpacingIcon /></Cell>
                  <Cell $w={6}><MutedChev /></Cell>
                </ToolRow>
                <ToolRow>
                  <Cell $w={24.5}><AlignIcon kind="left" /></Cell>
                  <Cell $w={24.5}><AlignIcon kind="center" /></Cell>
                  <Cell $w={24.5}><AlignIcon kind="right" /></Cell>
                  <Cell $w={24.5}><AlignIcon kind="justify" /></Cell>
                  <Cell $w={2} />
                  <CellRule />
                  <Cell $w={31}><ColumnsIcon /></Cell>
                  <MutedChev />
                </ToolRow>
              </ToolColumn>
              <Stack $ml={10}>
                <SmallRow $muted $gap={7}><TextDirIcon /><MutedChev /></SmallRow>
                <SmallRow $muted $gap={7}><AlignTextIcon /><MutedChev /></SmallRow>
                <SmallRow $muted $gap={6}><SmartArtIcon /><MutedChev /></SmallRow>
              </Stack>
            </GroupBody>
            <GroupLabel $pr={16}>Paragraph</GroupLabel>
            <LauncherIcon />
          </Group>

          <Group $w={363}>
            <GroupBody $pad={9.5}>
              <Gallery>
                <ShapeGrid>
                  {shapes.map((s, i) => (
                    <Svg key={i} w={18} h={18}>{s}</Svg>
                  ))}
                </ShapeGrid>
                <GalleryScroll>
                  <GalleryButton><Svg w={7} h={4}><path d="M.5 3.5l3-3 3 3" stroke="#777" /></Svg></GalleryButton>
                  <GalleryButton $active><Chev /></GalleryButton>
                  <GalleryButton $active>
                    <Svg w={7} h={7}><path d="M0 .5h7M.5 3l3 3 3-3" stroke="#333" /></Svg>
                  </GalleryButton>
                </GalleryScroll>
              </Gallery>
              <BigTool w={52} top={4} icon={<ArrangeIcon />} lines={["Arrange"]} chev />
              <BigTool w={38} top={4} icon={<QuickStylesIcon />} lines={["Quick", "Styles"]} chev muted />
              <Stack $ml={10} $row={23} $mt={-1}>
                <SmallRow $muted><FillIcon />Shape Fill<MutedChev /></SmallRow>
                <SmallRow $muted><OutlineIcon />Shape Outline<MutedChev /></SmallRow>
                <SmallRow $muted><EffectsIcon />Shape Effects<MutedChev /></SmallRow>
              </Stack>
            </GroupBody>
            <GroupLabel $pr={17}>Drawing</GroupLabel>
            <LauncherIcon />
          </Group>

          <Group $w={102}>
            <GroupBody $pad={11}>
              <Stack $row={23} $mt={-1}>
                <SmallRow><FindIcon />Find</SmallRow>
                <SmallRow><ReplaceIcon />Replace&nbsp;&nbsp;&nbsp;<Chev /></SmallRow>
                <SmallRow $gap={8}><SelectIcon />Select<Chev /></SmallRow>
              </Stack>
            </GroupBody>
            <GroupLabel>Editing</GroupLabel>
          </Group>

          <Group $w={193}>
            <GroupBody>
              <BigTool w={96} top={6} icon={<PdfLinkIcon />} lines={["Create PDF", "and Share link"]} />
              <BigTool w={80} top={6} icon={<PdfMailIcon />} lines={["Create PDF and", "Share via Outlook"]} />
            </GroupBody>
            <GroupLabel>Adobe Acrobat</GroupLabel>
          </Group>

          <Group $w={58}>
            <GroupBody>
              <BigTool w={57} top={3} icon={<MicIcon />} lines={["Dictate"]} chev />
            </GroupBody>
            <GroupLabel>Voice</GroupLabel>
          </Group>

          <Group $w={74}>
            <GroupBody>
              <BigTool w={73} top={3} icon={<SensitivityIcon />} lines={["Sensitivity"]} chev muted />
            </GroupBody>
            <GroupLabel>Sensitivity</GroupLabel>
          </Group>

          <Group $w={63}>
            <GroupBody>
              <BigTool w={62} top={3.7} icon={<AddinsIcon />} lines={["Add-ins"]} />
            </GroupBody>
            <GroupLabel>Add-ins</GroupLabel>
          </Group>

          <Group $w={67}>
            <GroupBody>
              <BigTool w={66} top={2.7} icon={<DesignerIcon />} lines={["Designer"]} />
            </GroupBody>
            <GroupLabel />
          </Group>

          <Group $w={115.5}>
            <GroupBody>
              <BigTool w={72} top={7} icon={<ShareFileIcon />} lines={["Share This", "File"]} chev />
              <BigTool w={29} top={6} icon={<WebexIcon />} lines={["Webex"]} chev />
            </GroupBody>
            <GroupLabel>Webex</GroupLabel>
          </Group>

          <Group $w={59}>
            <GroupBody>
              <BigTool w={58} top={2} icon={<SignIcon />} lines={["Fill and", "Sign"]} />
            </GroupBody>
            <GroupLabel>MSBDocs</GroupLabel>
          </Group>

          <CollapseChevron width="10" height="6" viewBox="0 0 10 6" fill="none">
            <path d="M1 5l4-4 4 4" stroke="#333" />
          </CollapseChevron>
        </GroupRow>
      </Ribbon>

      <Workspace>
        <ThumbPanel>
          <SectionTitle>
            <Svg w={7} h={7}><path d="M7 0v7H0z" fill="#eee" /></Svg>
            Untitled Section
          </SectionTitle>
          <ThumbRow>
            <NumberColumn>
              <SlideNumber>1</SlideNumber>
              <CommentBadge>2</CommentBadge>
            </NumberColumn>
            <ThumbFrame>
              <ThumbPage><FirstSlideThumb /></ThumbPage>
            </ThumbFrame>
          </ThumbRow>
          <ThumbRow>
            <NumberColumn>
              <SlideNumber>2</SlideNumber>
            </NumberColumn>
            <ThumbFrame $selected>
              <BlankPage />
            </ThumbFrame>
          </ThumbRow>
        </ThumbPanel>

        <Editor>
          <StageRow>
            <StageGrid>
              <HorizontalRuler />
              <VerticalRuler />
              <Slide>
                <SlideTop>
                  <TitleBlock>
                    <TitleLine />
                    <TitleLine />
                    <TitleLine />
                  </TitleBlock>
                  <LogoBox>Click to add text</LogoBox>
                </SlideTop>
                <Columns>
                  <Column $w={373.4}>
                    <SlideBand />
                    <SlideBody h={135.4} />
                    <SlideBand />
                    <SlideBody h={169} />
                    <SlideBand />
                    <SlideBody />
                  </Column>
                  <Column $w={373.7} $ml={16.6}>
                    <SlideBand />
                    <SlideBody h={434.7} />
                    <SlideBand />
                    <SlideBand kind="sub" h={18.5} />
                    <SlideBody />
                  </Column>
                  <Column $w={374.5} $ml={17}>
                    <SlideBand />
                    <Body $h={3} />
                    <SlideBand kind="sub" />
                    <SlideBody h={92.9} pt={4.9} />
                    <SlideBand kind="sub" />
                    <SlideBody h={146.2} pt={5.9} />
                    <SlideBand kind="sub" />
                    <SlideBody h={94} pt={5.9} />
                    <SlideBand />
                    <SlideBody h={108.1} pt={5.9} />
                    <SlideBand kind="small" />
                    <SlideBody small pt={5.9} />
                  </Column>
                </Columns>
                <FooterRow>
                  <NoteBox $w={572.3}>Click to add text</NoteBox>
                  <NoteBox $w={240.2}>Click to add text</NoteBox>
                  <NoteBox $w={267.5}>Click to add text</NoteBox>
                </FooterRow>
                <SourceBox>Click to add text</SourceBox>
              </Slide>
            </StageGrid>
            <Scrollbar>
              <ScrollButton $h={13}><Triangle /></ScrollButton>
              <ScrollTrack />
              <ScrollThumb />
              <ScrollButton $h={15}><Triangle down /></ScrollButton>
              <PageNav>
                <PageNavIcon />
                <PageNavIcon down />
              </PageNav>
            </Scrollbar>
          </StageRow>
          <Notes>Click to add notes</Notes>
        </Editor>
      </Workspace>
    </Root>
  );
}
